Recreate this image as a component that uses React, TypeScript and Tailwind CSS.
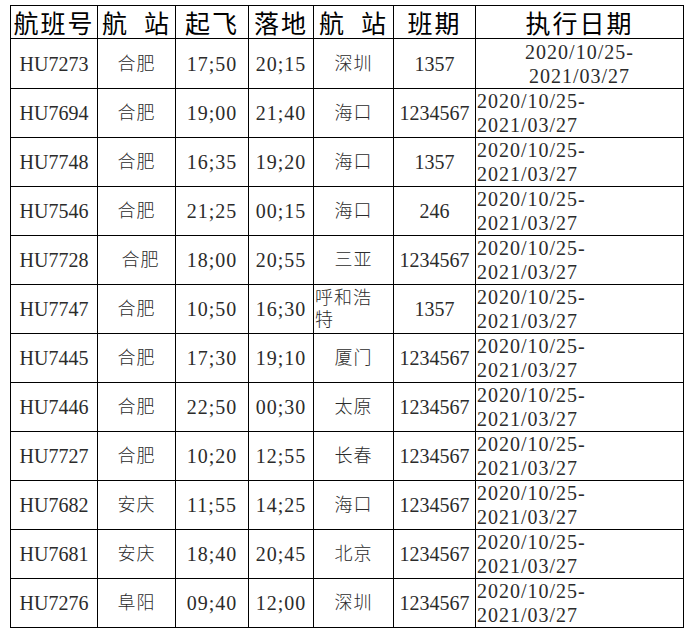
import React from "react";

type Row = {
  no: string;
  from: string;
  dep: string;
  arr: string;
  to: string;
  days: string;
};

const rows: Row[] = [
  { no: "HU7273", from: "合肥", dep: "17;50", arr: "20;15", to: "深圳", days: "1357" },
  { no: "HU7694", from: "合肥", dep: "19;00", arr: "21;40", to: "海口", days: "1234567" },
  { no: "HU7748", from: "合肥", dep: "16;35", arr: "19;20", to: "海口", days: "1357" },
  { no: "HU7546", from: "合肥", dep: "21;25", arr: "00;15", to: "海口", days: "246" },
  { no: "HU7728", from: "合肥", dep: "18;00", arr: "20;55", to: "三亚", days: "1234567" },
  { no: "HU7747", from: "合肥", dep: "10;50", arr: "16;30", to: "呼和浩特", days: "1357" },
  { no: "HU7445", from: "合肥", dep: "17;30", arr: "19;10", to: "厦门", days: "1234567" },
  { no: "HU7446", from: "合肥", dep: "22;50", arr: "00;30", to: "太原", days: "1234567" },
  { no: "HU7727", from: "合肥", dep: "10;20", arr: "12;55", to: "长春", days: "1234567" },
  { no: "HU7682", from: "安庆", dep: "11;55", arr: "14;25", to: "海口", days: "1234567" },
  { no: "HU7681", from: "安庆", dep: "18;40", arr: "20;45", to: "北京", days: "1234567" },
  { no: "HU7276", from: "阜阳", dep: "09;40", arr: "12;00", to: "深圳", days: "1234567" },
];

const cell = "border-r border-b border-black flex items-center justify-center";
const latin = "text-[20px] leading-[24px] text-[#2b2b2b]";
const cjk = "text-[18px] tracking-[1px] leading-[22px] font-light text-[#2b2b2b]";

export default function App() {
  return (
    <div
      className="w-[695px] h-[637px] bg-white pt-[5px] pl-[10px]"
      style={{ fontFamily: "'Liberation Serif', 'Noto Sans CJK SC', serif" }}
    >
      <div className="grid grid-cols-[87px_78px_73px_65px_80px_82px_208px] border-l border-t border-black w-[674px]">
        {["航班号", "航\u00a0\u00a0站", "起飞", "落地", "航\u00a0\u00a0站", "班期", "执行日期"].map((h, i) => (
          <div
            key={i}
            className={`${cell} h-[33px] text-[25px] tracking-[2px] leading-none text-black whitespace-nowrap`}
            style={{ fontFamily: "'Noto Sans CJK SC', sans-serif" }}
          >
            {h}
          </div>
        ))}
        {rows.map((r, idx) => {
          const h = idx === 0 ? "h-[50px]" : "h-[49px]";
          return (
            <React.Fragment key={r.no}>
              <div className={`${cell} ${h} ${latin}`}>{r.no}</div>
              <div className={`${cell} ${h} ${cjk} ${idx === 4 ? "pl-[8px]" : ""}`}>{r.from}</div>
              <div className={`${cell} ${h} ${latin} tracking-[1px]`}>{r.dep}</div>
              <div className={`${cell} ${h} ${latin} tracking-[1px]`}>{r.arr}</div>
              {r.to === "呼和浩特" ? (
                <div className={`border-r border-b border-black flex items-center justify-start pl-[1px] ${h} ${cjk}`}>
                  <span>
                    呼和浩
                    <br />特
                  </span>
                </div>
              ) : (
                <div className={`${cell} ${h} ${cjk}`}>{r.to}</div>
              )}
              <div className={`${cell} ${h} ${latin}`}>{r.days}</div>
              {idx === 0 ? (
                <div className={`${cell} ${h} ${latin} tracking-[1px] text-center`}>
                  <span>
                    2020/10/25-
                    <br />
                    2021/03/27
                  </span>
                </div>
              ) : (
                <div className={`border-r border-b border-black flex items-center justify-start pl-[1px] ${h} ${latin} tracking-[1px]`}>
                  <span>
                    2020/10/25-
                    <br />
                    2021/03/27
                  </span>
                </div>
              )}
            </React.Fragment>
          );
        })}
      </div>
    </div>
  );
}
